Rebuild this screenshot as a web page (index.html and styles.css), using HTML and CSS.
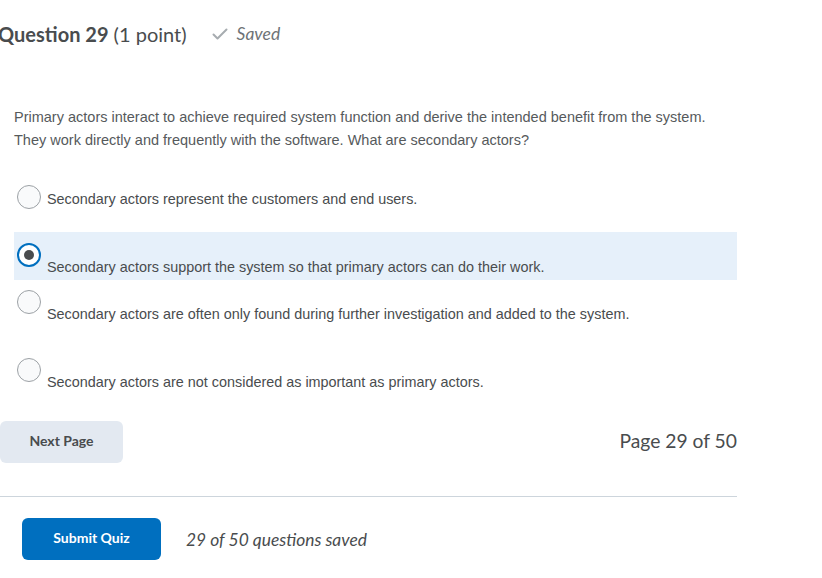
FILE: index.html
```html
<!DOCTYPE html>
<html lang="en">
<head>
<meta charset="utf-8">
<title>Question 29</title>
<link rel="stylesheet" href="styles.css">
</head>
<body>
<main class="page">
  <header class="q-header">
    <h1 class="q-title"><strong>Question 29</strong> <span class="q-points">(1 point)</span></h1>
    <div class="saved">
      <svg class="check" width="16" height="12" viewBox="0 0 16 12" aria-hidden="true"><path d="M1.5 6.5 L5.5 10.5 L14.5 1.5" fill="none" stroke="#a7acb0" stroke-width="2" stroke-linecap="round" stroke-linejoin="round"/></svg>
      <span>Saved</span>
    </div>
  </header>

  <p class="q-text">Primary actors interact to achieve required system function and derive the intended benefit from the system.<br>They work directly and frequently with the software. What are secondary actors?</p>

  <div class="options">
    <label class="option opt-1">
      <span class="radio"></span>
      <span class="opt-text centered">Secondary actors represent the customers and end users.</span>
    </label>
    <label class="option opt-2 selected">
      <span class="radio"><span class="dot"></span></span>
      <span class="opt-text">Secondary actors support the system so that primary actors can do their work.</span>
    </label>
    <label class="option opt-3">
      <span class="radio"></span>
      <span class="opt-text">Secondary actors are often only found during further investigation and added to the system.</span>
    </label>
    <label class="option opt-4">
      <span class="radio"></span>
      <span class="opt-text">Secondary actors are not considered as important as primary actors.</span>
    </label>
  </div>

  <div class="pager">
    <button class="btn btn-secondary">Next Page</button>
    <span class="page-count">Page 29 of 50</span>
  </div>

  <hr class="divider">

  <div class="submit-row">
    <button class="btn btn-primary">Submit Quiz</button>
    <span class="saved-count">29 of 50 questions saved</span>
  </div>
</main>
</body>
</html>
```

FILE: styles.css
```css
* { box-sizing: border-box; }
html, body { margin: 0; padding: 0; background: #ffffff; }
body {
  font-family: Lato, "Open Sans", sans-serif;
  color: #494c4e;
  width: 822px;
  height: 578px;
  overflow: hidden;
}
.page {
  width: 737px;
  display: flex;
  flex-direction: column;
}
.q-header {
  display: flex;
  align-items: center;
  height: 24px;
  margin-top: 22px;
  margin-left: -2px;
}
.q-title {
  margin: 0;
  font-size: 20px;
  font-weight: 400;
  line-height: 24px;
  color: #494c4e;
  white-space: nowrap;
}
.q-title strong { font-weight: 700; }
.saved {
  display: flex;
  align-items: center;
  margin-left: 25px;
  margin-top: -2px;
  font-style: italic;
  font-size: 17.5px;
  color: #6e7376;
}
.check { margin-right: 9px; margin-top: 1px; }

.q-text {
  margin: 60px 0 0 14px;
  font-family: "Liberation Sans", Arial, sans-serif;
  font-size: 14.5px;
  line-height: 23px;
  color: #565a5c;
}

.options { display: flex; flex-direction: column; }
.option {
  display: flex;
  align-items: flex-start;
  padding-left: 3px;
  margin-left: 14px;
  font-family: "Liberation Sans", Arial, sans-serif;
  font-size: 14.4px;
  color: #494c4e;
}
.radio {
  flex: none;
  width: 24px;
  height: 24px;
  border-radius: 50%;
  border: 1px solid #9ca1a5;
  background: #f9fafb;
  display: flex;
  align-items: center;
  justify-content: center;
  margin-right: 6px;
}
.opt-text { line-height: 24px; padding-top: 12px; }
.opt-text.centered { padding-top: 2px; }

.opt-1 { margin-top: 33px; }
.opt-2 { margin-top: 21px; padding-top: 11px; padding-bottom: 1px; background: #e6f0fa; }
.opt-3 { margin-top: 10px; }
.opt-4 { margin-top: 32px; }

.selected .radio { border: 2px solid #006fbf; background: #ffffff; }
.dot { width: 10px; height: 10px; border-radius: 50%; background: #494c4e; }

.pager {
  display: flex;
  align-items: center;
  justify-content: space-between;
  margin-top: 27px;
}
.btn {
  font-family: Lato, "Open Sans", sans-serif;
  font-weight: 700;
  font-size: 14px;
  line-height: 18px;
  padding: 0 0 3px;
  border: none;
  border-radius: 6px;
  height: 42px;
  cursor: pointer;
}
.btn-secondary {
  width: 123px;
  background: #e3e9f1;
  color: #494c4e;
}
.page-count { font-size: 19.3px; color: #494c4e; margin-top: -3px; }

.divider {
  margin: 33px 0 0 0;
  border: none;
  border-top: 1px solid #cdd5dc;
  height: 0;
}

.submit-row {
  display: flex;
  align-items: center;
  margin-top: 21px;
  padding-left: 22px;
}
.btn-primary {
  width: 139px;
  background: #006fbf;
  color: #ffffff;
}
.saved-count {
  margin-left: 25px;
  font-style: italic;
  font-size: 17.4px;
  color: #494c4e;
}
```
